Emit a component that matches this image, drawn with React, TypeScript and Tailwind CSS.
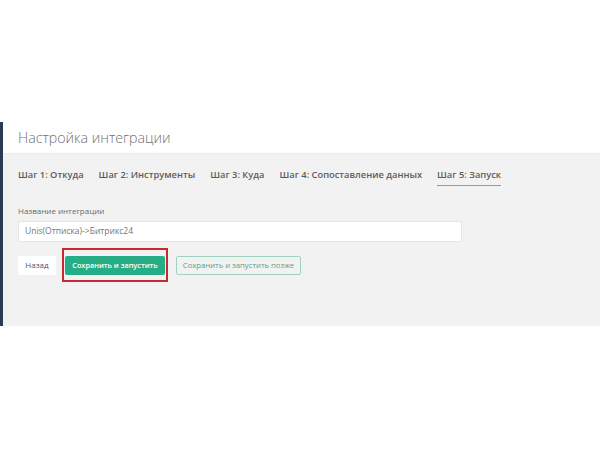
const tabs = [
  "Шаг 1: Откуда",
  "Шаг 2: Инструменты",
  "Шаг 3: Куда",
  "Шаг 4: Сопоставление данных",
  "Шаг 5: Запуск",
];

export default function App() {
  return (
    <div className="w-[600px] h-[450px] bg-white pt-[122px] font-['Open_Sans',sans-serif]">
      <div className="border-l-[3px] border-[#2c3a52] h-[204px] flex flex-col">
        <div className="h-[32px] bg-white flex items-center pl-[15px] pt-[1px] border-b border-[#ececec]">
          <h1 className="text-[14.2px] font-light text-[#707070] leading-none">Настройка интеграции</h1>
        </div>
        <div className="flex-1 bg-[#f2f2f2] pl-[15px]">
          <ul className="flex gap-[15px] pt-[16px]">
            {tabs.map((t, i) => (
              <li
                key={t}
                className={`text-[9.3px] font-semibold leading-none pb-[6px] text-[#5c5c5c] ${
                  i === 4 ? "border-b-[1.5px] border-[#5fb39a]" : ""
                }`}
              >
                {t}
              </li>
            ))}
          </ul>
          <div className="mt-[21px] text-[8px] text-[#6b6b6b] leading-none">Название интеграции</div>
          <div className="mt-[6px] w-[444px] h-[21px] bg-white border border-[#e6e6e6] flex items-center px-[6px] text-[8.5px] text-[#777]">
            Unis(Отписка)-&gt;Битрикс24
          </div>
          <div className="mt-[6px] flex items-center">
            <button className="h-[19px] w-[38px] bg-white text-[8px] text-[#555]">Назад</button>
            <div className="ml-[6px] border-2 border-[#c62a30] h-[34px] flex items-center px-[1px]">
              <button className="h-[19px] w-[100px] bg-[#26ad85] text-white text-[7.3px] font-semibold rounded-[2px]">
                Сохранить и запустить
              </button>
            </div>
            <button className="ml-[8px] h-[19px] w-[125px] border border-[#9fd3c1] rounded-[2px] text-[7.7px] text-[#5a9e88]">
              Сохранить и запустить позже
            </button>
          </div>
        </div>
      </div>
    </div>
  );
}
